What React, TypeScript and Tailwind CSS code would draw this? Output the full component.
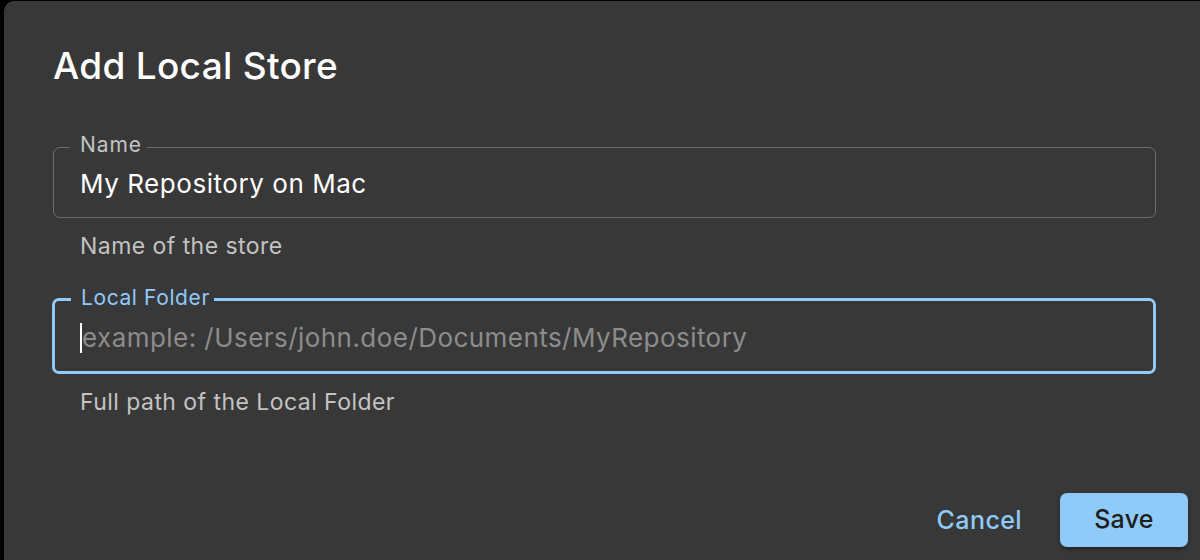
import { useState } from 'react';

const font = { fontFamily: 'Inter, "Noto Sans", sans-serif' };

export default function App() {
  const [name, setName] = useState('My Repository on Mac');

  return (
    <div className="w-[1200px] h-[560px] bg-black pt-px pl-[4px] overflow-hidden" style={font}>
      <div className="h-[559px] bg-[#383838] rounded-tl-[10px] flex flex-col pl-[49px] pr-[44px]">
        <h2 className="pt-[43px] text-[37px] leading-[44px] font-medium text-white tracking-[0.3px]">
          Add Local Store
        </h2>

        {/* Name */}
        <fieldset className="mt-[45px] border border-[#6e6e6e] rounded-[7px] px-[16px] pb-[18px]">
          <legend className="pl-[10px] pr-[5px] pb-[4px] text-[21px] leading-[24px] tracking-[0.9px] text-[#c3c3c3]">
            Name
          </legend>
          <input
            value={name}
            onChange={e => setName(e.target.value)}
            className="block w-full pl-[10px] mt-[8px] bg-transparent outline-none text-[26px] leading-[30px] tracking-[0.55px] text-white"
          />
        </fieldset>
        <p className="pl-[27px] mt-[15px] text-[23px] leading-[26px] tracking-[0.45px] text-[#c3c3c3]">Name of the store</p>

        {/* Local Folder */}
        <fieldset className="mt-[27px] -ml-px border-[3px] border-[#90caf9] rounded-[7px] px-[16px] pb-[18px] w-[1104px]">
          <legend className="pl-[10px] pr-[4px] pb-[3px] text-[21px] leading-[24px] tracking-[0.6px] text-[#90caf9]">
            Local Folder
          </legend>
          <div className="flex items-center pl-[10px] mt-[10px] h-[30px]">
            <span className="w-[2px] h-[30px] bg-white -ml-[1px]" />
            <span className="text-[26px] leading-[30px] tracking-[0.45px] text-[#8c8c8c]">
              example: /Users/john.doe/Documents/MyRepository
            </span>
          </div>
        </fieldset>
        <p className="pl-[27px] mt-[15px] text-[23px] leading-[26px] tracking-[0.45px] text-[#c3c3c3]">Full path of the Local Folder</p>

        <div className="mt-auto flex justify-end items-center gap-[38px] pb-[13px] -mr-[32px]">
          <button className="text-[25px] leading-[30px] font-medium tracking-[0.4px] text-[#90caf9]">Cancel</button>
          <button className="w-[128px] h-[54px] rounded-[7px] bg-[#90caf9] text-[25px] font-medium tracking-[0.3px] text-[#1e1e1e] shadow-[0_3px_3px_-2px_rgba(0,0,0,0.3),0_3px_5px_0_rgba(0,0,0,0.2)]">
            Save
          </button>
        </div>
      </div>
    </div>
  );
}
